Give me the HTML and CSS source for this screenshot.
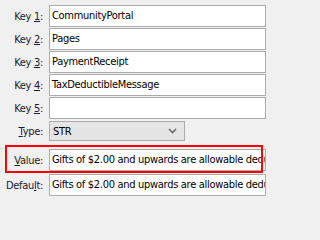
FILE: index.html
```html
<!DOCTYPE html>
<html>
<head>
<meta charset="utf-8">
<link rel="stylesheet" href="styles.css">
</head>
<body>
<div class="form">
  <div class="row key"><label class="lbl">Key <u>1</u>:</label><div class="field">CommunityPortal</div></div>
  <div class="row key"><label class="lbl">Key <u>2</u>:</label><div class="field">Pages</div></div>
  <div class="row key"><label class="lbl">Key <u>3</u>:</label><div class="field">PaymentReceipt</div></div>
  <div class="row key"><label class="lbl">Key <u>4</u>:</label><div class="field">TaxDeductibleMessage</div></div>
  <div class="row key"><label class="lbl">Key <u>5</u>:</label><div class="field"></div></div>
  <div class="row type"><label class="lbl"><u>T</u>ype:</label>
    <div class="combo"><span>STR</span>
      <svg class="chev" width="9" height="6" viewBox="0 0 9 6"><path d="M1 1 L4.5 4.5 L8 1" fill="none" stroke="#6b6b6b" stroke-width="1.6"/></svg>
    </div>
  </div>
  <div class="row value"><label class="lbl"><u>V</u>alue:</label><div class="field">Gifts of $2.00 and upwards are allowable deductions</div><div class="highlight"></div></div>
  <div class="row default"><label class="lbl">Defau<u>l</u>t:</label><div class="field">Gifts of $2.00 and upwards are allowable deductions</div></div>
</div>
</body>
</html>
```
FILE: styles.css
```css
html, body {
  margin: 0;
  padding: 0;
  background: #f0f0f0;
  width: 266px;
  height: 202px;
  overflow: hidden;
}
.form {
  padding-top: 5px;
  font-family: "DejaVu Sans Condensed", "DejaVu Sans", sans-serif;
  font-size: 11px;
  letter-spacing: -0.3px;
  color: #000;
}
.row {
  display: grid;
  grid-template-columns: 49px 217px;
  align-items: center;
}
.key {
  height: 22px;
  margin-bottom: 1px;
}
.lbl {
  text-align: right;
  padding-right: 6px;
  color: #1a1a2e;
  white-space: nowrap;
}
.field {
  box-sizing: border-box;
  height: 22px;
  border: 1px solid #ababab;
  background: #fff;
  padding: 0 2px;
  line-height: 20px;
  white-space: nowrap;
  overflow: hidden;
}
.type {
  height: 20px;
  margin-top: 2px;
}
.combo {
  box-sizing: border-box;
  width: 136px;
  height: 20px;
  border: 1px solid #acacac;
  background: #e5e5e5;
  display: flex;
  align-items: center;
  justify-content: space-between;
  padding: 0 7px 0 3px;
}
.chev {
  display: block;
}
.value {
  position: relative;
  height: 22px;
  margin-top: 8px;
}
.highlight {
  position: absolute;
  left: 5px;
  top: -4px;
  width: 258px;
  height: 28px;
  box-sizing: border-box;
  border: 2px solid #ff0000;
}
.default {
  height: 22px;
  margin-top: 3px;
}
```
